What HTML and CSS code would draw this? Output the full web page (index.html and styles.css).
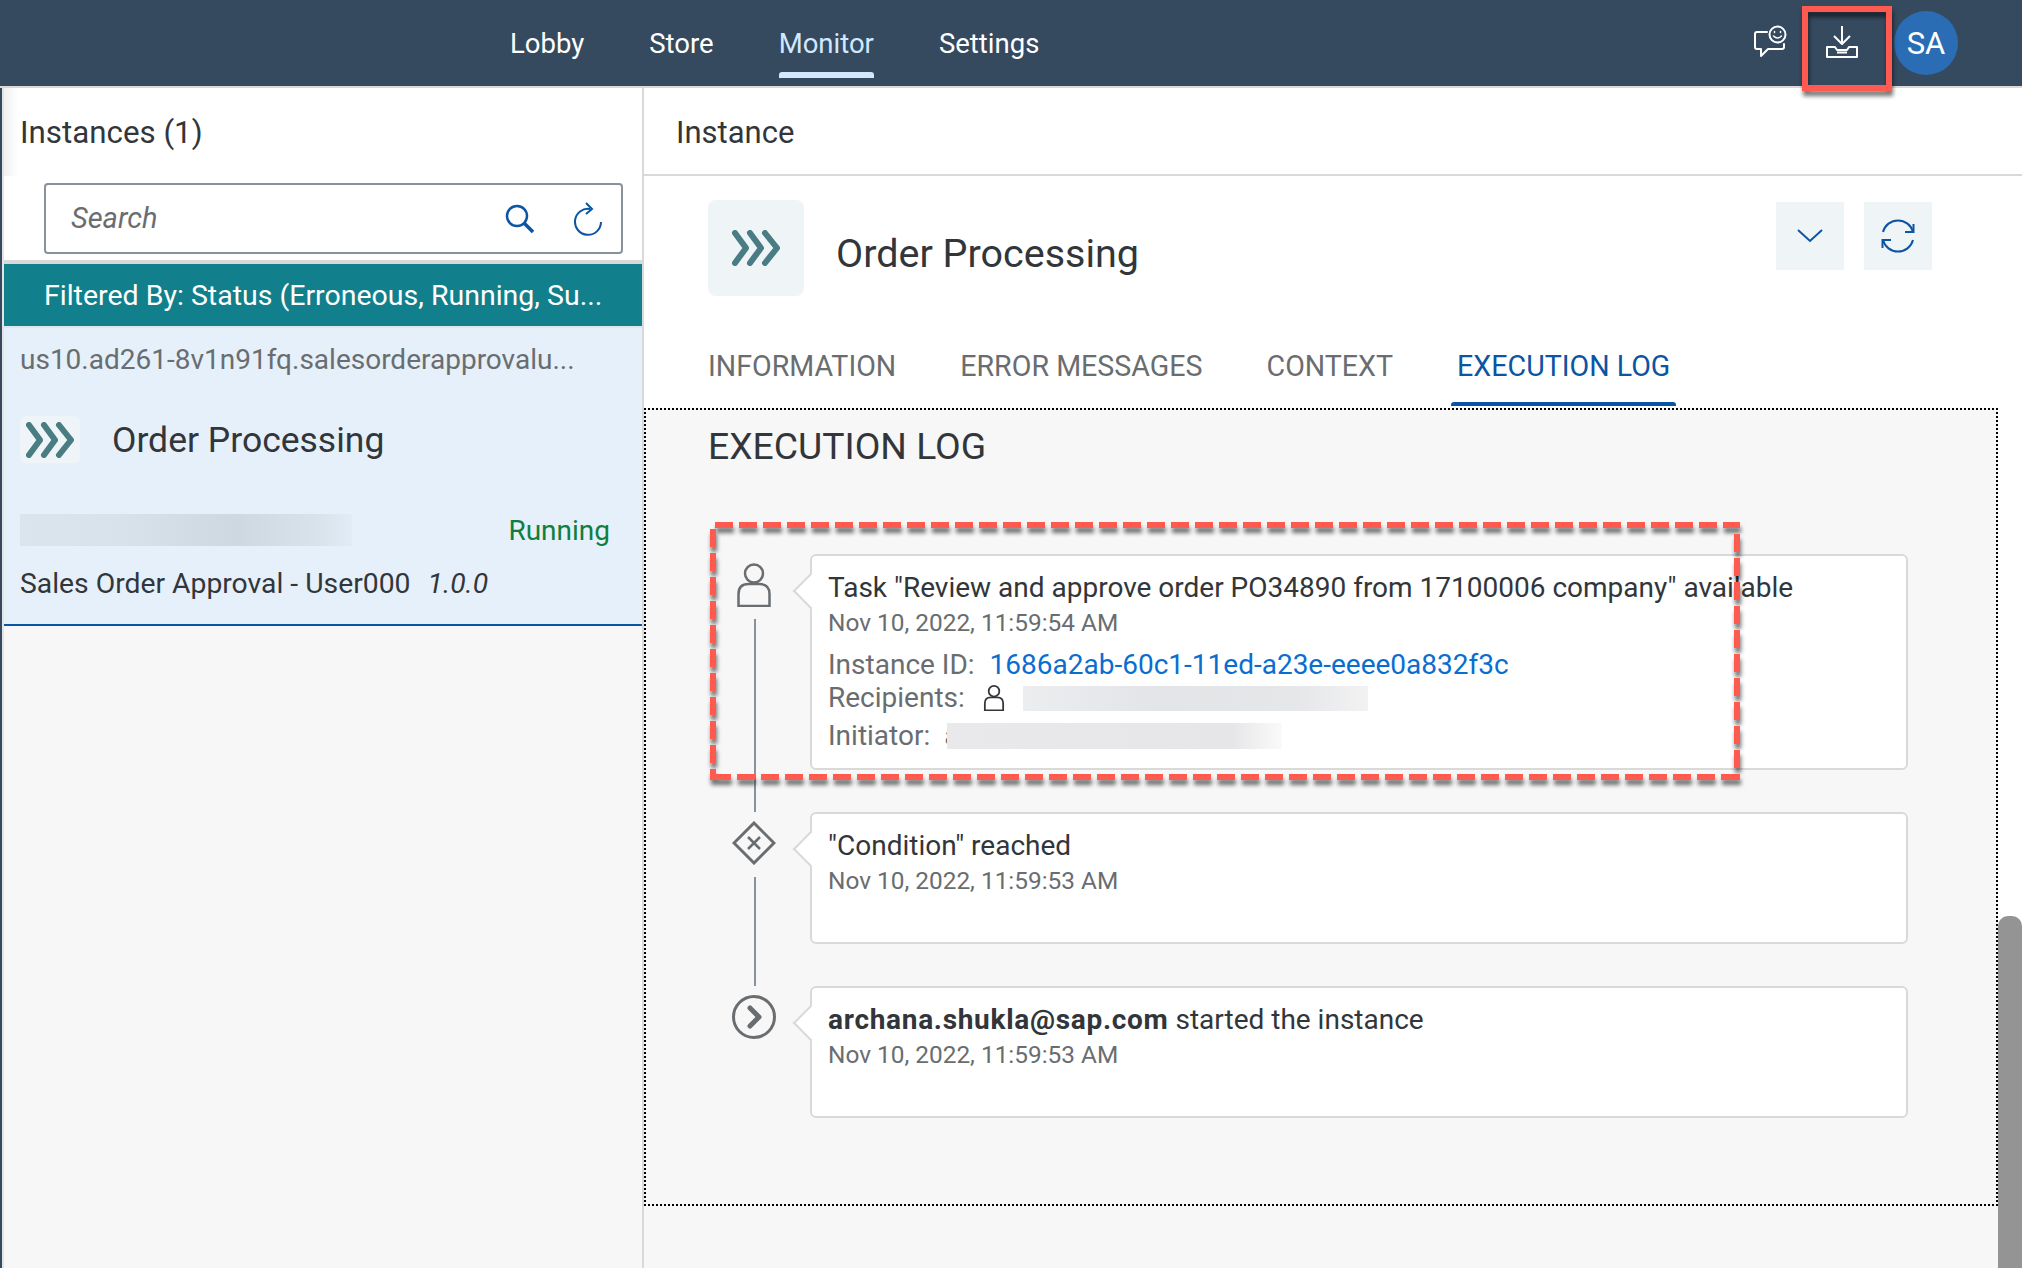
FILE: index.html
```html
<!DOCTYPE html>
<html>
<head>
    <meta charset="utf-8" />
    <title>Monitor - Instances</title>
    <link rel="stylesheet" href="styles.css">
</head>
<body>
    <header class="shell">
        <nav class="shell-nav">
            <a class="shell-link">Lobby</a>
            <a class="shell-link">Store</a>
            <a class="shell-link shell-link-active">Monitor</a>
            <a class="shell-link">Settings</a>
        </nav>
        <div class="shell-actions">
            <svg class="icon-feedback" viewBox="0 0 36 32" fill="none" stroke="#fff" stroke-width="2" stroke-linejoin="round" stroke-linecap="round">
                <path d="M14 7H4Q2 7 2 9V22Q2 24 4 24H8V31L15 24H29Q31 24 31 22V19" />
                <circle cx="24.5" cy="9.5" r="8" />
                <path d="M20.5 11Q24.500 15 28.500 11" stroke-width="1.500" />
                <path d="M21.500 6.500V7.500M27.500 6.500V7.500" stroke-width="1.500" />
            </svg>
            <svg class="icon-download" viewBox="0 0 32 32" fill="none" stroke="#fff" stroke-width="2" stroke-linejoin="round">
                <path d="M16 0V18M8 10L16 18L24 10" />
                <path d="M1 21H9L11 24H21L23 21H31V31H1Z" />
                <path d="M11 26.500H21" />
            </svg>
            <div class="avatar">SA</div>
        </div>
    </header>

    <main class="layout">
        <section class="list-pane">
            <h2 class="pane-title">Instances (1)</h2>
            <div class="search">
                <span class="search-hint">Search</span>
                <svg class="icon-search" viewBox="0 0 30 30" fill="none" stroke="#0a55a4" stroke-width="2.500">
                    <circle cx="12" cy="12" r="10" />
                    <path d="M19 19L28 28" stroke-width="3.500" />
                </svg>
                <svg class="icon-reload" viewBox="0 0 30 34" fill="none" stroke="#0a55a4" stroke-width="2">
                    <path d="M17 7A13 13 0 1 0 28 20" />
                    <path d="M13 1L19 7L13 12" />
                </svg>
            </div>
            <div class="filter-bar">Filtered By: Status (Erroneous, Running, Su...</div>
            <div class="list-item">
                <div class="item-id">us10.ad261-8v1n91fq.salesorderapprovalu...</div>
                <div class="item-head">
                    <div class="item-icon">
                        <svg class="icon-process" viewBox="0 0 48 36" fill="none" stroke="#4a7c83" stroke-width="6" stroke-linecap="round" stroke-linejoin="round">
                            <path d="M3 3L14 18L3 33M18 3L29 18L18 33M33 3L45 18L33 33" />
                        </svg>
                    </div>
                    <span class="item-name">Order Processing</span>
                </div>
                <div class="item-meta">
                    <div class="blur blur-item"></div>
                    <span class="status-running">Running</span>
                </div>
                <div class="item-def">Sales Order Approval - User000 <i class="item-version">1.0.0</i></div>
            </div>
        </section>

        <section class="detail-pane">
            <h2 class="detail-title">Instance</h2>
            <div class="object-head">
                <div class="object-icon">
                    <svg class="icon-process" viewBox="0 0 48 36" fill="none" stroke="#4a7c83" stroke-width="6" stroke-linecap="round" stroke-linejoin="round">
                        <path d="M3 3L14 18L3 33M18 3L29 18L18 33M33 3L45 18L33 33" />
                    </svg>
                </div>
                <h1 class="object-name">Order Processing</h1>
                <button class="square-btn">
                    <svg class="icon-chevron" viewBox="0 0 26 14" fill="none" stroke="#0a55a4" stroke-width="2">
                        <path d="M1 1L13 12L25 1" />
                    </svg>
                </button>
                <button class="square-btn">
                    <svg class="icon-sync" viewBox="0 0 34 34" fill="none" stroke="#0a55a4" stroke-width="2">
                        <path d="M2 13A15.500 15.500 0 0 1 32 13" />
                        <path d="M24 13H32.500V5" />
                        <path d="M32 21A15.500 15.500 0 0 1 2 21" />
                        <path d="M10 21H1.500V29" />
                    </svg>
                </button>
            </div>
            <div class="tabs">
                <a class="tab">INFORMATION</a>
                <a class="tab">ERROR MESSAGES</a>
                <a class="tab">CONTEXT</a>
                <a class="tab tab-active">EXECUTION LOG</a>
            </div>
            <div class="log-panel">
                <h3 class="log-title">EXECUTION LOG</h3>
                <div class="timeline">
                    <div class="log-row">
                        <div class="log-marker">
                            <svg class="icon-person" viewBox="0 0 34 44" fill="none" stroke="#6a6d70" stroke-width="2.500">
                                <circle cx="17" cy="10.500" r="9" />
                                <path d="M1.500 43V31Q1.500 21 11.500 21H22.500Q32.500 21 32.500 31V43Z" />
                            </svg>
                            <div class="log-line"></div>
                        </div>
                        <div class="log-card log-card-task">
                            <div class="log-text">Task "Review and approve order PO34890 from 17100006 company" available</div>
                            <div class="log-date">Nov 10, 2022, 11:59:54 AM</div>
                            <div class="log-field log-field-id"><span>Instance ID:</span><a class="log-link">1686a2ab-60c1-11ed-a23e-eeee0a832f3c</a></div>
                            <div class="log-field log-field-people">
                                <span>Recipients:</span>
                                <svg class="icon-person-small" viewBox="0 0 34 44" fill="none" stroke="#32363a" stroke-width="3">
                                    <circle cx="17" cy="10.500" r="9" />
                                    <path d="M1.500 43V31Q1.500 21 11.500 21H22.500Q32.500 21 32.500 31V43Z" />
                                </svg>
                                <div class="blur blur-recipient"></div>
                            </div>
                            <div class="log-field log-field-last">
                                <span>Initiator:</span>
                                <span class="initiator-start">a</span>
                                <div class="blur blur-initiator"></div>
                            </div>
                        </div>
                    </div>
                    <div class="log-row">
                        <div class="log-marker">
                            <svg class="icon-gateway" viewBox="0 0 44 44" fill="none" stroke="#6a6d70" stroke-width="3">
                                <path d="M22 2L42 22L22 42L2 22Z" />
                                <path d="M16 16L28 28M28 16L16 28" stroke-width="2.500" />
                            </svg>
                            <div class="log-line"></div>
                        </div>
                        <div class="log-card">
                            <div class="log-text">"Condition" reached</div>
                            <div class="log-date">Nov 10, 2022, 11:59:53 AM</div>
                        </div>
                    </div>
                    <div class="log-row log-row-last">
                        <div class="log-marker">
                            <svg class="icon-start" viewBox="0 0 44 44" fill="none" stroke="#6a6d70" stroke-width="3">
                                <circle cx="22" cy="22" r="20.500" />
                                <path d="M18 13L27 22L18 31" stroke-width="5" stroke-linejoin="round" stroke-linecap="round" />
                            </svg>
                        </div>
                        <div class="log-card">
                            <div class="log-text"><b class="log-user">archana.shukla@sap.com</b> started the instance</div>
                            <div class="log-date">Nov 10, 2022, 11:59:53 AM</div>
                        </div>
                    </div>
                </div>
            </div>
            <div class="detail-rest"></div>
        </section>
    </main>

    <div class="scroll-thumb"></div>

    <svg class="callouts" width="2022" height="1268" fill="none" stroke="#ff5a50" stroke-width="6">
        <rect x="1805" y="9" width="84" height="79" />
        <path d="M715 525H1740" stroke-dasharray="18 6" />
        <path d="M1737 525V780" stroke-dasharray="18 6" stroke-dashoffset="15" />
        <path d="M713 777H1740" stroke-dasharray="18 6" />
        <path d="M713 529V780" stroke-dasharray="18 6" />
    </svg>
</body>
</html>
```

FILE: styles.css
```css
*, *::before, *::after
{
    box-sizing: border-box;
}

body
{
    margin: 0;
    width: 2022px;
    height: 1268px;
    overflow: hidden;
    display: flex;
    flex-direction: column;
    position: relative;
    background: #354a5f;
    font-family: Roboto, "Liberation Sans", sans-serif;
    color: #32363a;
}

h1, h2, h3
{
    margin: 0;
    font-weight: 400;
}

svg
{
    display: block;
    flex: none;
}

/* shell bar */

.shell
{
    height: 88px;
    flex: none;
    display: flex;
    justify-content: space-between;
    padding-left: 510px;
    padding-right: 64px;
    border-bottom: 2px solid #d9d9d9;
}

.shell-nav
{
    display: flex;
    gap: 65px;
}

.shell-link
{
    position: relative;
    display: flex;
    align-items: center;
    height: 86px;
    font-size: 27.500px;
    color: #fff;
}

.shell-link-active
{
    color: #d1e8ff;
}

.shell-link-active::after
{
    content: "";
    position: absolute;
    left: 0;
    right: 0;
    bottom: 8px;
    height: 6px;
    background: #d1e8ff;
    border-radius: 3px 3px 0 0;
}

.shell-actions
{
    display: flex;
    align-items: center;
}

.icon-feedback
{
    width: 36px;
    height: 32px;
    margin-right: 37px;
    margin-top: -4px;
}

.icon-download
{
    width: 32px;
    height: 32px;
    margin-right: 36px;
    margin-top: -2px;
}

.avatar
{
    width: 64px;
    height: 64px;
    border-radius: 50%;
    background: #2a6db5;
    color: #fff;
    font-size: 31px;
    display: flex;
    align-items: center;
    justify-content: center;
}

/* panes */

.layout
{
    flex: 1;
    display: flex;
    min-height: 0;
    margin-left: 2px;
}

.list-pane
{
    width: 642px;
    flex: none;
    background: #f7f7f7;
    border-left: 2px solid #e4e4e4;
    border-right: 2px solid #d9d9d9;
}

.pane-title
{
    height: 88px;
    display: flex;
    align-items: center;
    padding-left: 16px;
    font-size: 31.300px;
    background: linear-gradient(90deg, #f0f0f0, #fff 14px);
}

.search
{
    height: 84px;
    padding: 7px 19px 6px 40px;
    background: #fff;
    position: relative;
}

.search::before
{
    content: "";
    display: block;
    height: 71px;
    border: 2px solid #89919a;
    border-radius: 4px;
}

.search-hint
{
    position: absolute;
    left: 67px;
    top: 22px;
    font-size: 29px;
    line-height: 40px;
    font-style: italic;
    color: #6a6d70;
}

.icon-search
{
    position: absolute;
    left: 501px;
    top: 28px;
    width: 30px;
    height: 30px;
}

.icon-reload
{
    position: absolute;
    left: 569px;
    top: 26px;
    width: 30px;
    height: 34px;
}

.filter-bar
{
    height: 66px;
    padding-left: 40px;
    display: flex;
    align-items: center;
    background: #11808c;
    border-top: 4px solid #d9d9d9;
    color: #fff;
    font-size: 28.500px;
}

.list-item
{
    background: #e5f0fa;
    border-top: 2px solid #dfe6ed;
    border-bottom: 2px solid #0a55a4;
    padding: 0 16px 24px;
}

.item-id
{
    height: 64px;
    display: flex;
    align-items: center;
    padding-bottom: 2px;
    font-size: 28px;
    color: #6a6d70;
}

.item-head
{
    display: flex;
    align-items: center;
    gap: 32px;
    margin-top: 24px;
}

.item-icon
{
    width: 60px;
    height: 47px;
    background: #eff4f8;
    border-radius: 6px;
    display: flex;
    align-items: center;
    justify-content: center;
}

.icon-process
{
    width: 48px;
    height: 36px;
}

.item-name
{
    font-size: 35.500px;
}

.item-meta
{
    display: flex;
    justify-content: space-between;
    align-items: center;
    height: 32px;
    margin-top: 51px;
    padding-right: 16px;
}

.status-running
{
    font-size: 28px;
    color: #107e3e;
}

.item-def
{
    margin-top: 22px;
    font-size: 28.300px;
    line-height: 32px;
}

.item-version
{
    margin-left: 10px;
}

.blur
{
    display: inline-block;
}

.blur-item
{
    width: 332px;
    height: 32px;
    background: linear-gradient(90deg, #dbe5ee, #d8e2eb 30%, #cdd8e1 65%, #d8e3ec 90%, #e1ecf6);
}

.detail-pane
{
    flex: 1;
    min-width: 0;
    background: #fff;
    display: flex;
    flex-direction: column;
}

.detail-title
{
    height: 88px;
    flex: none;
    display: flex;
    align-items: center;
    padding-left: 32px;
    padding-top: 2px;
    font-size: 31px;
    border-bottom: 2px solid #d9d9d9;
}

.object-head
{
    display: flex;
    align-items: flex-start;
    margin-top: 24px;
    padding-left: 64px;
    padding-right: 90px;
}

.object-icon
{
    width: 96px;
    height: 96px;
    flex: none;
    background: #eff4f7;
    border-radius: 8px;
    display: flex;
    align-items: center;
    justify-content: center;
}

.object-name
{
    flex: 1;
    margin-left: 32px;
    margin-top: 30px;
    font-size: 39.500px;
    line-height: 48px;
}

.square-btn
{
    width: 68px;
    height: 68px;
    margin: 2px 0 0 20px;
    padding: 0;
    border: 0;
    background: #eff4f7;
    display: flex;
    align-items: center;
    justify-content: center;
}

.icon-chevron
{
    width: 26px;
    height: 14px;
}

.icon-sync
{
    width: 34px;
    height: 34px;
}

.tabs
{
    display: flex;
    gap: 52px;
    height: 82px;
    margin-top: 28px;
    padding-left: 58px;
    flex: none;
}

.tab
{
    position: relative;
    display: flex;
    align-items: center;
    padding: 2px 6px 0;
    font-size: 28.600px;
    color: #6a6d70;
}

.tab-active
{
    color: #0a55a4;
}

.tab-active::after
{
    content: "";
    position: absolute;
    left: 0;
    right: 0;
    bottom: 0;
    height: 4px;
    background: #0a55a4;
    border-radius: 3px 3px 0 0;
}

.log-panel
{
    width: 1354px;
    height: 798px;
    flex: none;
    margin-top: 2px;
    border: 2px dotted #000;
    background: #f7f7f7;
    padding: 16px 0 0 62px;
}

.log-title
{
    font-size: 37.300px;
    line-height: 40px;
}

.timeline
{
    margin-top: 88px;
    margin-left: 15px;
    width: 1185px;
}

.log-row
{
    display: flex;
    padding-bottom: 42px;
}

.log-row-last
{
    padding-bottom: 0;
}

.log-marker
{
    width: 64px;
    flex: none;
    margin-right: 23px;
    margin-bottom: -42px;
    padding-top: 9px;
    display: flex;
    flex-direction: column;
    align-items: center;
}

.log-marker svg
{
    margin-left: -2px;
}

.icon-person
{
    width: 34px;
    height: 44px;
}

.icon-gateway, .icon-start
{
    width: 44px;
    height: 44px;
}

.log-line
{
    flex: 1;
    width: 2px;
    margin-top: 12px;
    background: #89919a;
}

.log-card
{
    position: relative;
    flex: 1;
    height: 132px;
    padding: 15px 16px 0;
    background: #fff;
    border: 2px solid #d9d9d9;
    border-radius: 6px;
}

.log-card-task
{
    height: 216px;
}

.log-card::before
{
    content: "";
    position: absolute;
    left: -14px;
    top: 22px;
    width: 26px;
    height: 26px;
    transform: rotate(45deg);
    background: #fff;
    border-left: 2px solid #d9d9d9;
    border-bottom: 2px solid #d9d9d9;
}

.log-text
{
    position: relative;
    font-size: 28px;
    line-height: 34px;
}

.log-user
{
    letter-spacing: 0.700px;
}

.log-date
{
    margin-top: 3px;
    font-size: 24.400px;
    line-height: 30px;
    color: #6a6d70;
}

.log-field
{
    display: flex;
    align-items: center;
    font-size: 28px;
    line-height: 34px;
    color: #6a6d70;
}

.log-field-id
{
    margin-top: 10px;
}

.log-field-people
{
    margin-top: -1px;
}

.log-field-last
{
    margin-top: 4px;
}

.log-link
{
    margin-left: 15px;
    color: #0a6ed1;
}

.icon-person-small
{
    width: 22px;
    height: 26px;
    margin-left: 18px;
}

.blur-recipient
{
    width: 345px;
    height: 25px;
    margin-left: 18px;
    background: linear-gradient(90deg, #ecedef, #e3e4e7 40%, #e6e7e9 80%, #f2f2f3);
}

.initiator-start
{
    margin-left: 14px;
}

.blur-initiator
{
    width: 335px;
    height: 26px;
    margin-left: -12px;
    background: linear-gradient(90deg, #e9e9eb, #e6e6e8 85%, #fafafa);
}

.detail-rest
{
    flex: 1;
    width: 1354px;
    background: #f7f7f7;
}

.scroll-thumb
{
    position: absolute;
    right: 0;
    top: 916px;
    bottom: 0;
    width: 24px;
    background: #949494;
    border-radius: 10px 10px 0 0;
}

.callouts
{
    position: absolute;
    left: 0;
    top: 0;
    pointer-events: none;
    filter: drop-shadow(1px 5px 2px rgba(0, 0, 0, 0.55));
}
```
